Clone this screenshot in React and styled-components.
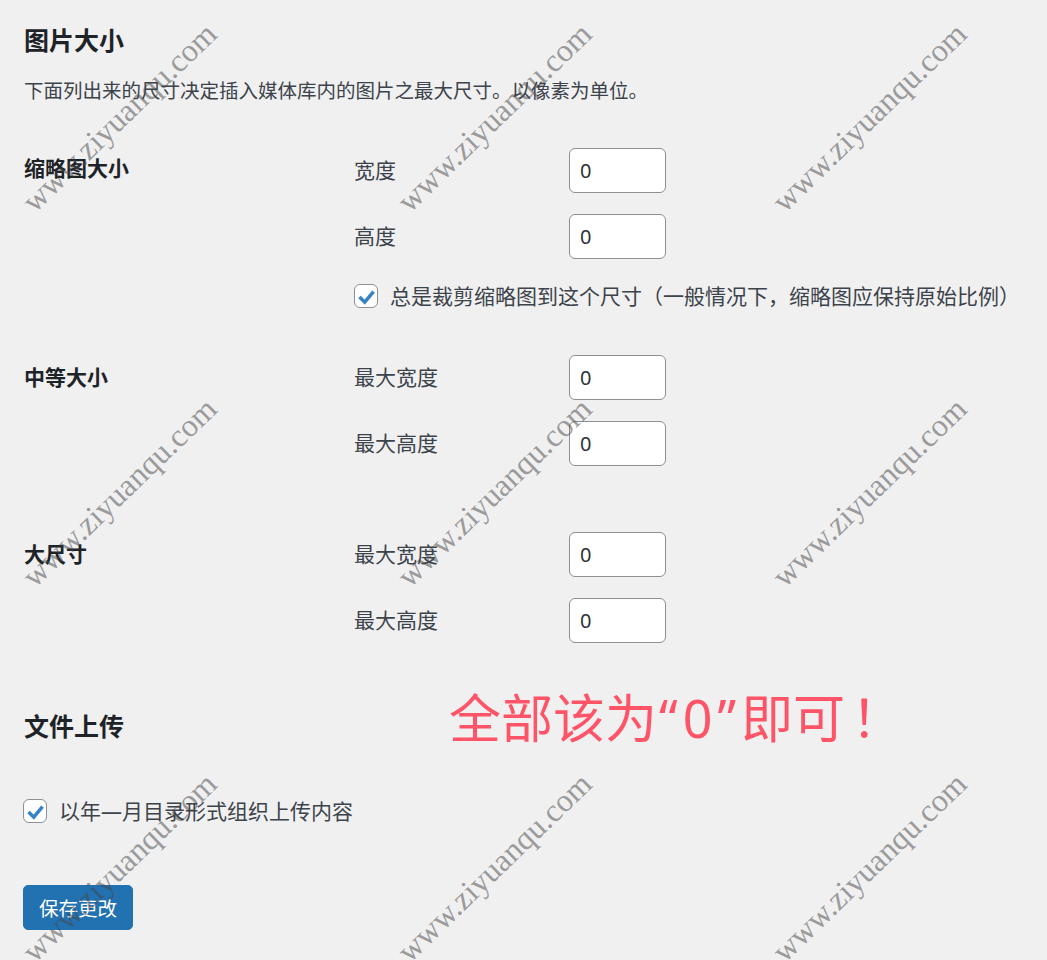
import React from "react";
import styled, { createGlobalStyle } from "styled-components";

const GlobalStyle = createGlobalStyle`
  html, body { margin: 0; padding: 0; background: #f0f0f1; }
  body {
    font-family: "Noto Sans", "Noto Sans CJK SC", sans-serif;
    color: #3c434a;
    -webkit-font-smoothing: antialiased;
  }
  * { box-sizing: border-box; }
`;

const Page = styled.div`
  position: relative;
  min-height: 960px;
  padding: 22px 24px 0;
  overflow: hidden;
`;

const SectionTitle = styled.h2`
  margin: ${(p) => p.$mt || 0}px 0 0;
  font-size: 25px;
  line-height: 36px;
  font-weight: 700;
  color: #1d2327;
`;

const Description = styled.p`
  margin: 18px 0 0;
  font-size: 19.5px;
  line-height: 30px;
`;

const SettingRow = styled.div`
  display: grid;
  grid-template-columns: 330px 1fr;
  margin-top: ${(p) => p.$mt}px;
`;

const RowTitle = styled.div`
  font-size: 21px;
  line-height: 44px;
  font-weight: 700;
  color: #1d2327;
  margin-top: ${(p) => p.$shift || 0}px;
`;

const Fields = styled.div`
  display: flex;
  flex-direction: column;
  gap: 22px;
`;

const Field = styled.div`
  display: flex;
  align-items: center;
  height: 44px;
`;

const FieldLabel = styled.label`
  width: 215px;
  font-size: 21px;
  line-height: 30px;
`;

const NumberInput = styled.input`
  width: 97px;
  height: 45px;
  margin: 0;
  padding: 0 10px;
  border: 1px solid #8c8f94;
  border-radius: 6px;
  background: #fff;
  color: #2c3338;
  font-family: "Noto Sans", sans-serif;
  font-size: 20px;
  outline: none;
`;

const CheckRow = styled.label`
  display: flex;
  align-items: center;
  gap: 12px;
  height: 32px;
  font-size: 21px;
  line-height: 30px;
  margin-left: ${(p) => p.$ml || 0}px;
  margin-top: ${(p) => p.$mt || 0}px;
`;

const CheckBox = styled.span`
  display: inline-flex;
  align-items: center;
  justify-content: center;
  flex: none;
  width: 24px;
  height: 24px;
  border: 1px solid #8c8f94;
  border-radius: 6px;
  background: #fff;
`;

const PrimaryButton = styled.button`
  display: block;
  margin: 58px 0 0 -1px;
  height: 45px;
  padding: 0 15px;
  border: 1px solid #2271b1;
  border-radius: 5px;
  background: #2271b1;
  color: #fff;
  font-family: "Noto Sans CJK SC", sans-serif;
  font-size: 19.5px;
  line-height: 43px;
  cursor: pointer;
`;

const Annotation = styled.div`
  position: absolute;
  left: 449px;
  top: 688px;
  font-family: "Noto Sans", "Noto Sans CJK SC", sans-serif;
  font-size: 52px;
  line-height: 60px;
  font-weight: 400;
  color: #fe5468;
  white-space: nowrap;
  z-index: 3;
`;

const Quote = styled.span`
  padding-left: 2px;
  letter-spacing: 5px;
`;

const Bang = styled.span`
  padding-left: 6px;
`;

const Watermark = styled.span`
  position: absolute;
  left: ${(p) => p.$x}px;
  top: ${(p) => p.$y}px;
  transform: translate(-50%, -50%) rotate(-44deg);
  font-family: "Liberation Serif", serif;
  font-size: 32px;
  line-height: 1;
  color: rgba(70, 70, 70, 0.52);
  white-space: nowrap;
  pointer-events: none;
  z-index: 4;
`;

const Check = () => (
  <CheckBox>
    <svg width="21" height="21" viewBox="0 0 24 24">
      <polyline
        points="4,12.5 10,18.5 20,6.5"
        fill="none"
        stroke="#3582c4"
        strokeWidth="4"
        strokeLinejoin="miter"
      />
    </svg>
  </CheckBox>
);

const SizeField = ({ label }) => (
  <Field>
    <FieldLabel>{label}</FieldLabel>
    <NumberInput type="text" defaultValue="0" />
  </Field>
);

const marks = [];
[117, 492, 867].forEach((y) =>
  [119, 494, 869].forEach((x) => marks.push({ x, y }))
);

export default function App() {
  return (
    <>
      <GlobalStyle />
      <Page>
        <SectionTitle>图片大小</SectionTitle>
        <Description>下面列出来的尺寸决定插入媒体库内的图片之最大尺寸。以像素为单位。</Description>

        <SettingRow $mt={42}>
          <RowTitle $shift={-2}>缩略图大小</RowTitle>
          <Fields>
            <SizeField label="宽度" />
            <SizeField label="高度" />
            <CheckRow>
              <Check />
              总是裁剪缩略图到这个尺寸（一般情况下，缩略图应保持原始比例）
            </CheckRow>
          </Fields>
        </SettingRow>

        <SettingRow $mt={43}>
          <RowTitle>中等大小</RowTitle>
          <Fields>
            <SizeField label="最大宽度" />
            <SizeField label="最大高度" />
          </Fields>
        </SettingRow>

        <SettingRow $mt={67}>
          <RowTitle>大尺寸</RowTitle>
          <Fields>
            <SizeField label="最大宽度" />
            <SizeField label="最大高度" />
          </Fields>
        </SettingRow>

        <SectionTitle $mt={66}>文件上传</SectionTitle>
        <CheckRow $ml={-1} $mt={51}>
          <Check />
          以年—月目录形式组织上传内容
        </CheckRow>

        <PrimaryButton type="button">保存更改</PrimaryButton>

        <Annotation>
          全部该为<Quote>“0”</Quote>即可<Bang>！</Bang>
        </Annotation>

        {marks.map((m, i) => (
          <Watermark key={i} $x={m.x} $y={m.y}>
            www.ziyuanqu.com
          </Watermark>
        ))}
      </Page>
    </>
  );
}
